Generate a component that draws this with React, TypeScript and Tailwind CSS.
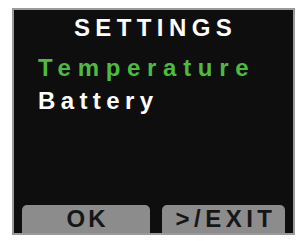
import React from "react";

const font = { fontFamily: '"Liberation Sans", Arial, sans-serif' };

export default function App() {
  return (
    <div className="w-[300px] h-[251px] bg-white pt-[8px] pl-[12px]" style={font}>
      {/* Screen */}
      <div className="w-[283px] h-[227px] border-2 border-[#9a9a9a] bg-[#0e0e0e] flex flex-col">
        <div className="pt-[4px] pl-[4px] text-center text-white font-bold text-[24px] leading-[28px] tracking-[5.4px]">
          SETTINGS
        </div>
        <div className="mt-[9px] pl-[24px] font-bold text-[24px] leading-[33px]">
          <div className="text-[#4dbb3d] tracking-[6.7px]">Temperature</div>
          <div className="text-white tracking-[5.4px]">Battery</div>
        </div>
        <div className="mt-auto flex px-[8px] gap-[12px]">
          <div className="w-[128px] h-[28px] pl-[3px] rounded-t-[5px] bg-[#8c8c8c] text-center text-[#161616] font-bold text-[24px] leading-[28px] tracking-[3px]">
            OK
          </div>
          <div className="w-[123px] h-[28px] pl-[5px] rounded-t-[5px] bg-[#8c8c8c] text-center text-[#161616] font-bold text-[24px] leading-[28px] tracking-[4.5px]">
            &gt;/EXIT
          </div>
        </div>
      </div>
    </div>
  );
}
